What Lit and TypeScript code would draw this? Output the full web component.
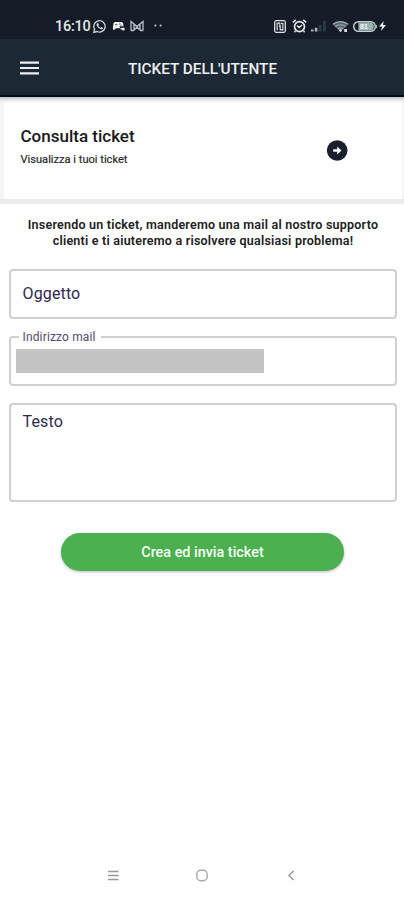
import { LitElement, html, css, svg } from "lit";
import { customElement } from "lit/decorators.js";

@customElement("status-bar")
class StatusBar extends LitElement {
  static styles = css`
    :host { display: flex; align-items: center; height: 39px; box-sizing: border-box; padding: 13px 18px 0 55px; background: #151c28; color: #e4e8ec; }
    .time { font-size: 14.5px; line-height: 20px; width: 38px; padding-top: 1px; letter-spacing: -0.25px; white-space: nowrap; font-weight: 500; }
    .left, .right { display: flex; align-items: center; }
    .right { margin-left: auto; }
    svg { display: block; flex: none; overflow: visible; }
    .chat { margin-right: 6px; }
    .game { margin-right: 5px; }
    .mail { margin-right: 10px; }
    .tag { margin-right: 6px; }
    .alarm { margin-right: 4px; }
    .signal { margin-right: 5px; }
    .wifi { margin-right: 4px; }
    .battery { margin-right: 2px; }
    .level { font: bold 7px "Liberation Sans", sans-serif; fill: #f4f8f8; }
  `;
  render() {
    return html`
      <div class="left">
        <span class="time">16:10</span>
        <svg class="chat" width="13" height="13" viewBox="0 0 13 13">
          <path d="M.8 12.3l.8-3A5.7 5.7 0 1 1 4 11.5z" fill="none" stroke="#d5dade" stroke-width="1.3"/>
          <path d="M4.1 3.3l1-.2.8 1.8-.6.8c.5 1 1.2 1.6 2.2 2l.8-.8 1.7.9c0 1.2-1 1.7-1.9 1.5-2.4-.5-4.4-2.5-4.6-4.5 0-.6.2-1.1.6-1.5z" fill="#d5dade"/>
        </svg>
        <svg class="game" width="13" height="12" viewBox="0 0 13 12">
          <path d="M2.6 2h6.8c1.5 0 2 1.4 2 4.2H7.8v2H4.2L2.3 9.8C1.2 10.2.7 9 .9 7.2L1.6 3z" fill="#edf0f3"/>
          <path d="M3 4.7h2.4M7.1 4h1.2M8.3 5.2h1" stroke="#151c28" stroke-width=".7"/>
          <path d="M8.5 8.7h2.6" stroke="#edf0f3" stroke-width="1.5"/><circle cx="11.3" cy="9" r="1.5" fill="#edf0f3"/>
        </svg>
        <svg class="mail" width="14" height="12" viewBox="0 0 14 12">
          <path d="M1 10.7V1.5l6 5 6-5v9.2M4 10.5V4.4M10 10.5V4.4M1 10.5h3M10 10.5h3M4 10l3-2.8 3 2.8" fill="none" stroke="#b5bdc5" stroke-width="1.35"/>
        </svg>
        <svg width="9" height="4" viewBox="0 0 9 4"><circle cx="1.4" cy="1.5" r="1.1" fill="#c4c9ce"/><circle cx="6.6" cy="1.5" r="1.1" fill="#c4c9ce"/></svg>
      </div>
      <div class="right">
        <svg class="tag" width="12" height="13" viewBox="0 0 12 13">
          <rect x=".7" y=".7" width="10.6" height="11.6" rx="1.5" fill="none" stroke="#dce0e3" stroke-width="1.3"/>
          <path d="M3.2 10.3V3.2h2.6v4.3M6.2 5.3v4.5h2.6V3M7 3.3h1.8" fill="none" stroke="#dce0e3" stroke-width="1.2"/>
        </svg>
        <svg class="alarm" width="15" height="14" viewBox="0 0 15 14">
          <circle cx="7.5" cy="7.6" r="5" fill="none" stroke="#e5e8ea" stroke-width="1.7"/>
          <path d="M.8 3.4L3.8.9M14.2 3.4l-3-2.5M3.4 12.1l-1 1.2M11.6 12.1l1 1.2M5 6.7l2.2 1.8L10 6" fill="none" stroke="#e5e8ea" stroke-width="1.5"/>
        </svg>
        <svg class="signal" width="16" height="12" viewBox="0 0 16 12">
          <path d="M0 11.5v-2h2.5v2zM3.8 11.5V7.8h2.6v3.7z" fill="#a9b2b8"/>
          <path d="M7.7 11.5V5h2.8v6.5zM12 11.5V1h2.8v10.5z" fill="#2b3b45"/>
        </svg>
        <svg class="wifi" width="17" height="13" viewBox="0 0 17 13">
          <path d="M.5 4.2c4.5-4 11.5-4 16 0L8.5 12z" fill="#52636d"/>
          <path d="M.9 4.2c4.5-3.5 10.7-3.5 15.2 0M3.3 6.5c3-2.2 7.4-2.2 10.4 0M5.8 8.8c1.7-1.2 3.7-1.2 5.4 0" fill="none" stroke="#a2afb5" stroke-width="1.1"/>
          <path d="M8.5 9l1.7 1.4L8.5 12l-1.7-1.6zM12.2 9h2.8v3h-2.8z" fill="#d5dadc"/>
        </svg>
        <svg class="battery" width="24" height="11" viewBox="0 0 24 11">
          <rect x=".7" y=".7" width="21.6" height="9.6" rx="4.8" fill="#151c28" stroke="#c6d0d1" stroke-width="1.4"/>
          <path d="M5.5 1.5h12.3c4 0 4 8 0 8H5.5z" fill="#9cafb2"/>
          <text class="level" x="7" y="8">81</text><path d="M23.4 4v3" stroke="#b5c0c2"/>
        </svg>
        <svg width="7" height="10" viewBox="0 0 7 10"><path d="M4.7 0L0 5.5h3L2.1 10 7 4H4z" fill="#eceff0"/></svg>
      </div>`;
  }
}

@customElement("outlined-field")
class OutlinedField extends LitElement {
  static properties = { label: {}, variant: {} };
  declare label: string;
  declare variant: string;
  static styles = css`
    :host { display: block; }
    .box { box-sizing: border-box; height: 50px; margin: 0; padding: 13px 11.5px; border: 2px solid #d0d0d0; border-radius: 4px; min-width: 0; font-size: 16px; line-height: 20px; color: #30294f; letter-spacing: .14px; }
    .area { height: 99px; padding-top: 7px; }
    .filled { height: 56px; padding: 5px 5px 0; }
    legend { font-size: 12px; line-height: 14px; padding: 0 5px 0 4px; margin-left: 2.5px; color: #514c6b; letter-spacing: .15px; width: 73px; white-space: nowrap; }
    .value { width: 248px; height: 24px; background: #c4c4c4; }
  `;
  render() {
    return this.variant === "filled"
      ? html`<fieldset class="box filled"><legend>${this.label}</legend><div class="value"></div></fieldset>`
      : html`<div class="box ${this.variant === "area" ? "area" : ""}">${this.label}</div>`;
  }
}

@customElement("app-root")
class AppRoot extends LitElement {
  static styles = css`
    :host { display: flex; flex-direction: column; height: 900px; background: #fefefe; font-family: Roboto, sans-serif; overflow: hidden; }
    svg { display: block; }
    .bar { display: grid; grid-template-columns: 20px 1fr; align-items: center; height: 58px; box-sizing: border-box; padding: 2px 20px 0; background: #1d2835; border-bottom: 2px solid #050d19; color: #eef1f4; flex: none; }
    h1 { margin: 1px 0 0 -19px; text-align: center; font-size: 15.3px; line-height: 20px; font-weight: 500; letter-spacing: 0; white-space: nowrap; }
    .card { display: flex; justify-content: space-between; box-sizing: border-box; height: 107px; padding: 27px 55px 0 20.5px; border-bottom: 5px solid #ebebeb; background: linear-gradient(#bfc3c7, #e6e8ea 3px, #fefefe00 6px), linear-gradient(90deg, #f5f6f7 4px, #fefefe 4px, #fefefe 402px, #f5f5f5 402px); flex: none; }
    h2 { margin: 0; font-size: 17px; line-height: 25px; font-weight: 500; color: #191919; white-space: nowrap; }
    .sub { margin: 4px 0 0; font-size: 11.1px; line-height: 14px; color: #292929; white-space: nowrap; -webkit-text-stroke: .2px #292929; }
    .go { margin-top: 16px; }
    .note { margin: 13px 0 0; padding-left: 2px; text-align: center; font-size: 12.5px; line-height: 15.5px; letter-spacing: .22px; font-weight: 600; color: #202020; white-space: nowrap; }
    .note span { display: block; }
    .form { display: flex; flex-direction: column; margin: 21px 7px 0 9px; }
    .mail { margin-top: 11px; }
    .text { margin-top: 17px; }
    .send { align-self: center; display: block; margin: 31px 1px 0 0; width: 283px; height: 38px; padding: 0; border: 0; border-radius: 19px; background: #4caf50; box-shadow: 0 1px 3px #0004; color: #f6fff5; font: 500 14.4px Roboto, sans-serif; }
    .nav { display: flex; justify-content: space-between; align-items: center; margin: auto 107px 18px 107px; height: 14px; }
  `;
  render() {
    return html`
      <status-bar></status-bar>
      <header class="bar">
        <svg width="20" height="14" viewBox="0 0 20 14"><path d="M0 1.7h19M0 7h19M0 12.3h19" stroke="#eceff1" stroke-width="2.2"/></svg>
        <h1>TICKET DELL'UTENTE</h1>
      </header>
      <section class="card">
        <div><h2>Consulta ticket</h2><p class="sub">Visualizza i tuoi ticket</p></div>
        <svg class="go" width="22" height="21" viewBox="0 0 22 21"><circle cx="10.2" cy="10.5" r="10.3" fill="#17202c"/><path d="M6.2 9.3h4V6.6l4.2 3.9-4.2 3.9v-2.7h-4z" fill="#fff"/></svg>
      </section>
      <p class="note"><span>Inserendo un ticket, manderemo una mail al nostro supporto</span><span>clienti e ti aiuteremo a risolvere qualsiasi problema!</span></p>
      <div class="form">
        <outlined-field label="Oggetto"></outlined-field>
        <outlined-field class="mail" label="Indirizzo mail" variant="filled"></outlined-field>
        <outlined-field class="text" label="Testo" variant="area"></outlined-field>
        <button class="send">Crea ed invia ticket</button>
      </div>
      <nav class="nav">
        ${[
          svg`<path d="M1 2.5h10.5M1 6.5h10.5M1 10.5h10.5" stroke="#999" stroke-width="1.4"/>`,
          svg`<rect x=".8" y="1.3" width="10.4" height="10.4" rx="4" fill="none" stroke="#aaa" stroke-width="1.4"/>`,
          svg`<path d="M8.5 2L4 6.5 8.5 11" fill="none" stroke="#999" stroke-width="1.5"/>`,
        ].map((shape) => html`<svg width="12" height="13" viewBox="0 0 12 13">${shape}</svg>`)}
      </nav>`;
  }
}
